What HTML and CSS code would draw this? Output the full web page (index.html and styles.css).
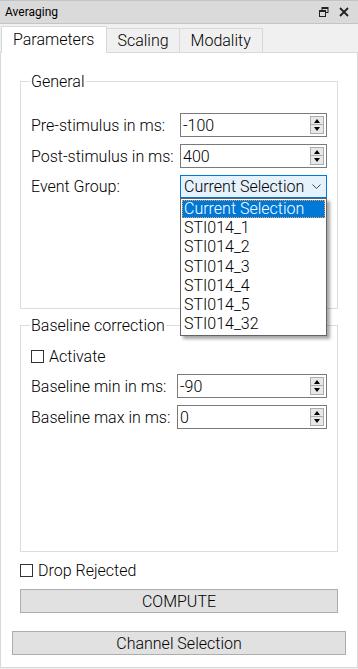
FILE: index.html
```html
<!doctype html>
<html lang="en">
<head>
	<meta charset="utf-8">
	<title>Averaging</title>
	<link rel="stylesheet" href="styles.css">
</head>
<body>
<div class="window">
	<div class="titlebar">
		<span class="title">Averaging</span>
		<span class="tb-icons">
			<svg width="10" height="10" viewBox="0 0 10 10"><rect x="3" y="0.5" width="6" height="5" fill="none" stroke="#222" stroke-width="1"/><rect x="0.5" y="3.5" width="6" height="6" fill="#dadada" stroke="#222" stroke-width="1"/><line x1="0.5" y1="4.5" x2="6.5" y2="4.5" stroke="#222"/><line x1="3" y1="1.5" x2="9" y2="1.5" stroke="#222"/></svg>
			<svg width="10" height="10" viewBox="0 0 10 10"><path d="M1 1 L9 9 M9 1 L1 9" stroke="#222" stroke-width="1.8"/></svg>
		</span>
	</div>
	<div class="tabs">
		<div class="tab active">Parameters</div>
		<div class="tab">Scaling</div>
		<div class="tab last">Modality</div>
	</div>
	<div class="pane">
		<div class="inner">
			<fieldset class="group general">
				<legend>General</legend>
				<div class="row">
					<label>Pre-stimulus in ms:</label>
					<div class="spin"><span class="val">-100</span><span class="arrows"><span class="up"></span><span class="down"></span></span></div>
				</div>
				<div class="row">
					<label>Post-stimulus in ms:</label>
					<div class="spin"><span class="val">400</span><span class="arrows"><span class="up"></span><span class="down"></span></span></div>
				</div>
				<div class="row">
					<label>Event Group:</label>
					<div class="combo">
						<span class="val">Current Selection</span>
						<svg class="chev" width="9" height="6" viewBox="0 0 9 6"><path d="M0.5 0.5 L4.5 4.5 L8.5 0.5" fill="none" stroke="#444" stroke-width="1"/></svg>
						<ul class="popup">
							<li class="sel">Current Selection</li>
							<li>STI014_1</li>
							<li>STI014_2</li>
							<li>STI014_3</li>
							<li>STI014_4</li>
							<li>STI014_5</li>
							<li>STI014_32</li>
						</ul>
					</div>
				</div>
			</fieldset>

			<fieldset class="group baseline">
				<legend>Baseline correction</legend>
				<div class="check"><span class="box"></span>Activate</div>
				<div class="row b">
					<label>Baseline min in ms:</label>
					<div class="spin"><span class="val">-90</span><span class="arrows"><span class="up"></span><span class="down"></span></span></div>
				</div>
				<div class="row b">
					<label>Baseline max in ms:</label>
					<div class="spin"><span class="val">0</span><span class="arrows"><span class="up"></span><span class="down"></span></span></div>
				</div>
			</fieldset>

			<div class="check drop"><span class="box"></span>Drop Rejected</div>
			<button class="btn compute">COMPUTE</button>
		</div>
		<button class="btn channel">Channel Selection</button>
	</div>
</div>
</body>
</html>
```

FILE: styles.css
```css
html,body{
	margin:0;
	padding:0;
	background:#f0f0f0;
	font-family: Roboto, "Liberation Sans", sans-serif;
	font-weight:300;
	color:#000;
}
*{
	box-sizing:border-box;
}
.window{
	width:358px;
	height:669px;
	display:flex;
	flex-direction:column;
}
	.titlebar{
		height:24px;
		background:#dadada;
		border-top:1px solid #c4c4c4;
		border-bottom:1px solid #c4c4c4;
		display:flex;
		align-items:center;
		justify-content:space-between;
		padding:0 9px 0 5px;
		font-size:12px;
		font-weight:400;
	}
	.tb-icons{
		display:flex;
		gap:10px;
		align-items:center;
	}
	.tabs{
		height:28px;
		display:flex;
		align-items:flex-end;
		padding-left:1px;
		position:relative;
		z-index:1;
	}
	.tab{
		height:24px;
		padding:0 10px;
		border:1px solid #d9d9d9;
		border-bottom:none;
		border-left:none;
		background:#f0f0f0;
		font-size:16px;
		line-height:23px;
	}
	.tab.last{
		padding:0 11px;
	}
	.tab.active{
		height:27px;
		margin-bottom:-1px;
		background:#fff;
		border-left:1px solid #d9d9d9;
		padding:0 12px 0 11px;
		line-height:26px;
	}
	.pane{
		flex:1;
		background:#fff;
		border:1px solid #d9d9d9;
		margin-bottom:1px;
		padding:0 11px;
	}
	.inner{
		padding:20px 8px 0 8px;
	}
	.group{
		margin:0;
		border:1px solid #dcdcdc;
		padding:0 10px;
		min-width:0;
	}
	.group legend{
		font-size:16px;
		padding:0 1px;
		margin-left:-1px;
		line-height:17px;
	}
	.general{
		height:236px;
		padding-top:23px;
	}
	.baseline{
		height:235px;
		margin-top:8px;
		padding-top:10px;
	}
	.row{
		display:flex;
		align-items:center;
		justify-content:space-between;
		font-size:16px;
		margin-bottom:7px;
	}
	.spin{
		width:147px;
		height:24px;
		border:1px solid #7a7a7a;
		display:flex;
		align-items:center;
		justify-content:space-between;
		padding:0 1px 0 2px;
		font-size:16px;
	}
	.row.b .spin{
		width:150px;
	}
	.arrows{
		display:flex;
		flex-direction:column;
		margin-right:1px;
	}
	.arrows span{
		width:14px;
		height:9px;
		background:#e8e8e8;
		border:1px solid #adadad;
		position:relative;
	}
	.arrows .down{
		border-top:none;
	}
	.arrows .up:after, .arrows .down:after{
		content:"";
		position:absolute;
		left:3px;
		border-left:3.5px solid transparent;
		border-right:3.5px solid transparent;
	}
	.arrows .up:after{
		top:2px;
		border-bottom:4px solid #000;
	}
	.arrows .down:after{
		top:2px;
		border-top:4px solid #000;
	}
	.combo{
		width:147px;
		height:23px;
		border:1px solid #0078d7;
		background:#e5f1fb;
		display:flex;
		align-items:center;
		justify-content:space-between;
		padding:0 5px 0 3px;
		position:relative;
		font-size:16px;
	}
	.popup{
		position:absolute;
		top:22px;
		left:-1px;
		width:147px;
		margin:0;
		padding:1px;
		list-style:none;
		background:#fff;
		border:1px solid #646464;
		box-shadow:3px 3px 3px rgba(0,0,0,.35);
		z-index:5;
	}
	.popup li{
		height:19.3px;
		line-height:19px;
		padding-left:2px;
		font-size:16px;
	}
	.popup li.sel{
		height:18px;
		line-height:16px;
		background:#0078d7;
		color:#fff;
		border:1px dotted #f0a050;
		padding-left:1px;
	}
	.check{
		display:flex;
		align-items:center;
		font-size:16px;
		height:24px;
		margin-bottom:6px;
	}
	.check .box{
		width:13px;
		height:13px;
		border:1px solid #333;
		background:#fff;
		margin-right:5px;
	}
	.drop{
		margin-top:6px;
		margin-bottom:7px;
	}
	.btn{
		display:block;
		width:100%;
		height:24px;
		background:#e1e1e1;
		border:1px solid #adadad;
		font-family: Roboto, "Liberation Sans", sans-serif;
		font-weight:300;
		font-size:16px;
		color:#000;
		padding:0;
	}
	.btn.channel{
		margin-top:18px;
	}
```
